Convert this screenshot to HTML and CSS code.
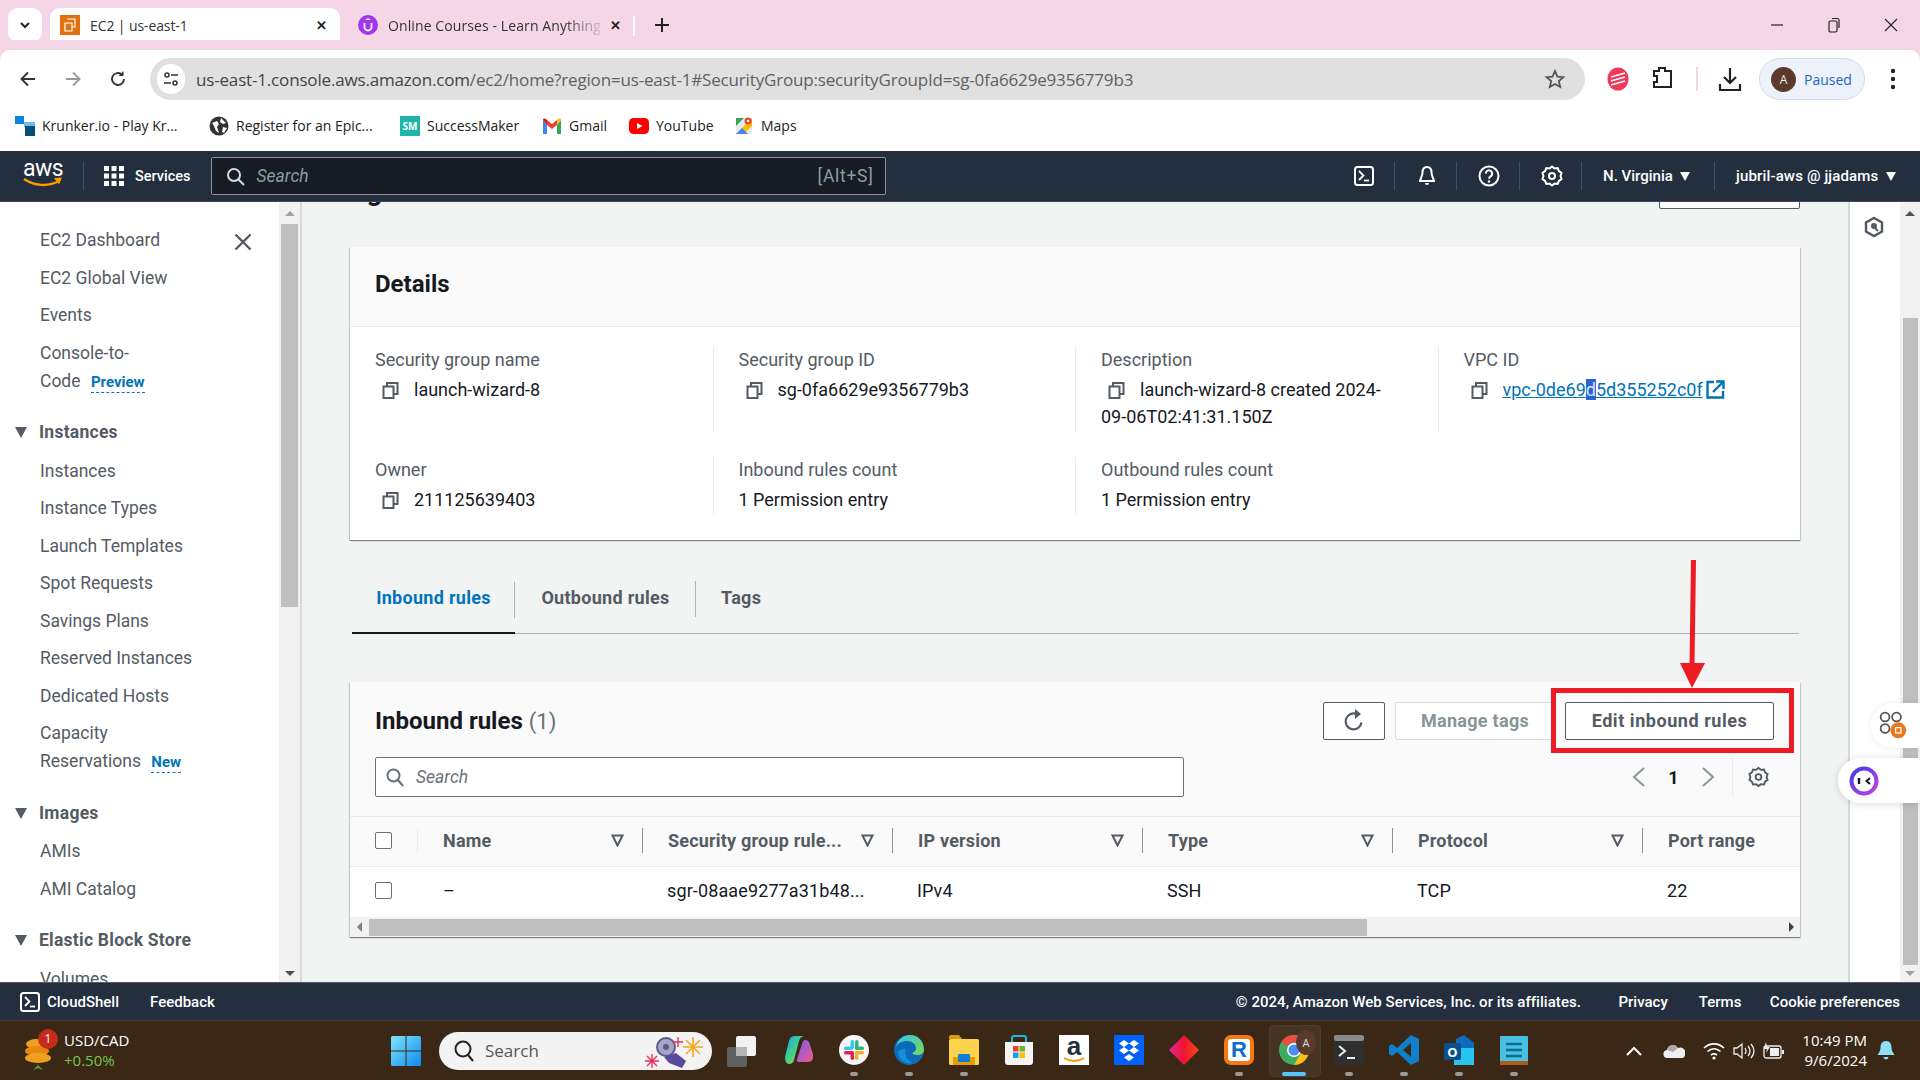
FILE: index.html
```html
<!DOCTYPE html>
<html lang="en">

<head>
    <meta charset="UTF-8">
    <title>EC2 | us-east-1</title>
    <link rel="stylesheet" href="styles.css">
</head>

<body>
    <!-- browser -->
    <div class="tabstrip">
        <div class="tab-search"><svg width="14" height="14" viewBox="0 0 14 14"><path d="M3 5l4 4 4-4" fill="none" stroke="#222" stroke-width="2"/></svg></div>
        <div class="tab active">
            <svg class="favicon" width="20" height="20" viewBox="0 0 20 20"><rect width="20" height="20" fill="#e2700f"/><path d="M7 4h8v8h-3M5 8h7v8H5z" fill="none" stroke="#fff" stroke-width="1.2"/></svg>
            <span class="tab-title">EC2 | us-east-1</span>
            <span class="tab-x">✕</span>
        </div>
        <div class="tab other">
            <svg class="favicon" width="20" height="20" viewBox="0 0 20 20"><circle cx="10" cy="10" r="10" fill="#a435f0"/><path d="M6.5 8v4a3.5 3.5 0 0 0 7 0V8" fill="none" stroke="#fff" stroke-width="1.8"/><path d="M10 3l3 2H7z" fill="#fff"/></svg>
            <span class="tab-title fade">Online Courses - Learn Anything</span>
            <span class="tab-x">✕</span>
        </div>
        <div class="tab-sep"></div>
        <svg class="tab-new" width="16" height="16" viewBox="0 0 16 16"><path d="M8 1v14M1 8h14" stroke="#222" stroke-width="2"/></svg>
        <div class="win-controls">
            <svg width="14" height="14" viewBox="0 0 14 14"><path d="M1 7h12" stroke="#222" stroke-width="1.2"/></svg>
            <svg width="14" height="16" viewBox="0 0 14 16"><rect x="2" y="4" width="8" height="11" rx="1.5" fill="none" stroke="#222" stroke-width="1.2"/><path d="M5 1.5h5a2 2 0 0 1 2 2V11" fill="none" stroke="#222" stroke-width="1.2"/></svg>
            <svg width="14" height="14" viewBox="0 0 14 14"><path d="M1 1l12 12M13 1L1 13" stroke="#222" stroke-width="1.1"/></svg>
        </div>
    </div>

    <div class="toolbar">
        <svg class="nav-btn" width="20" height="20" viewBox="0 0 20 20"><path d="M17 10H4M10 3.5L3.5 10l6.5 6.5" fill="none" stroke="#333" stroke-width="1.9"/></svg>
        <svg class="nav-btn" width="20" height="20" viewBox="0 0 20 20"><path d="M3 10h13M10 3.5l6.5 6.5-6.5 6.5" fill="none" stroke="#999" stroke-width="1.9"/></svg>
        <svg class="nav-btn" width="20" height="20" viewBox="0 0 20 20"><path d="M16 10a6 6 0 1 1-2-4.5" fill="none" stroke="#333" stroke-width="1.9"/><path d="M15.500 2v5h-5z" fill="#333"/></svg>
        <div class="omnibox">
            <div class="site-info"><svg width="18" height="18" viewBox="0 0 18 18"><circle cx="5" cy="5" r="2" fill="none" stroke="#333" stroke-width="1.5"/><circle cx="13" cy="13" r="2" fill="none" stroke="#333" stroke-width="1.5"/><path d="M9 5h7M2 13h7" stroke="#333" stroke-width="1.5"/></svg></div>
            <span class="url"><b>us-east-1.console.aws.amazon.com</b>/ec2/home?region=us-east-1#SecurityGroup:securityGroupId=sg-0fa6629e9356779b3</span>
            <svg class="star" width="22" height="22" viewBox="0 0 22 22"><path d="M11 3l2.400 5.600 6 .5-4.600 4 1.400 5.900L11 16l-5.200 3 1.400-5.900-4.600-4 6-.5z" fill="none" stroke="#555" stroke-width="1.8"/></svg>
        </div>
        <svg class="ext-red" width="22" height="24" viewBox="0 0 22 24"><ellipse cx="11" cy="12" rx="10.500" ry="11.500" fill="#f0385b"/><path d="M4 10l14-4M4 14l14-4M4 18l14-4" stroke="#fff" stroke-width="1.800"/></svg>
        <svg class="ext-puzzle" width="22" height="26" viewBox="0 0 22 26"><path d="M2 5h5V2h6v3h6v16H2v-5h3v-6H2z" fill="none" stroke="#222" stroke-width="2"/></svg>
        <div class="tool-sep"></div>
        <svg class="ext-download" width="24" height="26" viewBox="0 0 24 26"><path d="M12 2v15M6 11l6 6 6-6" fill="none" stroke="#222" stroke-width="2.200"/><path d="M2 18v6h20v-6" fill="none" stroke="#222" stroke-width="2.200"/></svg>
        <div class="profile"><span class="avatar">A</span><span>Paused</span></div>
        <svg class="menu-dots" width="6" height="24" viewBox="0 0 6 24"><circle cx="3" cy="4" r="2.200" fill="#222"/><circle cx="3" cy="12" r="2.200" fill="#222"/><circle cx="3" cy="20" r="2.200" fill="#222"/></svg>
    </div>

    <div class="bookmarks">
        <div class="bm krunker"><svg width="20" height="20" viewBox="0 0 20 20"><rect width="9" height="8" fill="#0b84d8"/><rect x="9" y="6" width="11" height="5" fill="#6dbbe9"/><rect x="10" y="10" width="10" height="10" fill="#064d78"/></svg><span>Krunker.io - Play Kr...</span></div>
        <div class="bm epic"><svg width="20" height="20" viewBox="0 0 20 20"><circle cx="10" cy="10" r="9.500" fill="#333"/><path d="M3 7l5-2 2 3-2 3 2 6-3-2-2-5zM12 2l5 5-3 1-3-2zM14 11l4 1-3 5-2-1z" fill="#fff"/></svg><span>Register for an Epic...</span></div>
        <div class="bm sm"><span class="sm-icon">SM</span><span>SuccessMaker</span></div>
        <div class="bm gmail"><svg width="20" height="18" viewBox="0 0 20 18"><path d="M1 3v14h4V8z" fill="#4285f4"/><path d="M19 3v14h-4V8z" fill="#34a853"/><path d="M5 8V3l5 4 5-4v5l-5 4z" fill="#ea4335"/><path d="M1 3l4 5V3C3 1 1 1 1 3z" fill="#c5221f"/><path d="M19 3l-4 5V3c2-2 4-2 4 0z" fill="#fbbc04"/></svg><span>Gmail</span></div>
        <div class="bm yt"><svg width="20" height="18" viewBox="0 0 20 18"><rect y="1" width="20" height="16" rx="4.500" fill="#f00"/><path d="M8 6l5.500 3L8 12z" fill="#fff"/></svg><span>YouTube</span></div>
        <div class="bm maps"><svg width="20" height="20" viewBox="0 0 20 20"><path d="M2 2h16v16H2z" fill="#e8eaed"/><path d="M2 18L18 2v8l-8 8z" fill="#fbbc04"/><path d="M2 2h8L2 10z" fill="#34a853"/><path d="M2 18l6-6 6 6z" fill="#4285f4"/><circle cx="14" cy="5" r="3.500" fill="#ea4335"/><circle cx="14" cy="5" r="1.300" fill="#fff"/></svg><span>Maps</span></div>
    </div>

    <!-- console top bar -->
    <header class="aws-bar">
        <div class="aws-logo"><span>aws</span><svg width="40" height="12" viewBox="0 0 40 12"><path d="M1 2c10 7 24 8 35 2" fill="none" stroke="#f90" stroke-width="2.400"/><path d="M31 1l8-.5-3 7z" fill="#f90"/></svg></div>
        <div class="bar-sep logo-sep"></div>
        <svg class="grid-icon" width="20" height="20" viewBox="0 0 20 20" fill="#fff"><rect width="5" height="5"/><rect x="7.500" width="5" height="5"/><rect x="15" width="5" height="5"/><rect y="7.500" width="5" height="5"/><rect x="7.500" y="7.500" width="5" height="5"/><rect x="15" y="7.500" width="5" height="5"/><rect y="15" width="5" height="5"/><rect x="7.500" y="15" width="5" height="5"/><rect x="15" y="15" width="5" height="5"/></svg>
        <span class="services">Services</span>
        <div class="aws-search">
            <svg width="19" height="19" viewBox="0 0 19 19"><circle cx="8" cy="8" r="6" fill="none" stroke="#d5dbdb" stroke-width="2"/><path d="M12.500 12.500L18 18" stroke="#d5dbdb" stroke-width="2"/></svg>
            <span class="ph">Search</span>
            <span class="kbd">[Alt+S]</span>
        </div>
        <div class="bar-right">
            <div class="bar-icon"><svg width="20" height="20" viewBox="0 0 20 20"><rect x="1" y="1" width="18" height="18" rx="2.500" fill="none" stroke="#fff" stroke-width="2"/><path d="M5 5l4.500 4.500L5 14" fill="none" stroke="#fff" stroke-width="1.800"/><path d="M10 14.500h5" stroke="#fff" stroke-width="1.800"/></svg></div>
            <div class="bar-icon"><svg width="20" height="22" viewBox="0 0 20 22"><path d="M10 2c-3 0-4.500 2.500-4.500 5.500 0 4-2.500 7-2.500 8.500h14c0-1.500-2.500-4.500-2.500-8.500C14.500 4.500 13 2 10 2z" fill="none" stroke="#fff" stroke-width="2"/><path d="M8 18a2 2 0 0 0 4 0z" fill="#fff"/></svg></div>
            <div class="bar-icon"><svg width="22" height="22" viewBox="0 0 22 22"><circle cx="11" cy="11" r="9.500" fill="none" stroke="#fff" stroke-width="2"/><path d="M7.800 8.500a3.200 3.200 0 1 1 4.800 2.800c-1 .6-1.600 1.200-1.600 2.400" fill="none" stroke="#fff" stroke-width="2"/><circle cx="11" cy="16.500" r="1.200" fill="#fff"/></svg></div>
            <div class="bar-icon"><svg width="22" height="22" viewBox="0 0 22 22"><path d="M11 1.500l2.500 2 3.200-.4 1.200 3 2.600 1.900-1 3 1 3-2.600 1.900-1.200 3-3.200-.4-2.500 2-2.500-2-3.200.4-1.200-3L1.500 14l1-3-1-3 2.600-1.900 1.200-3 3.200.4z" fill="none" stroke="#fff" stroke-width="2"/><circle cx="11" cy="11" r="3" fill="none" stroke="#fff" stroke-width="2"/></svg></div>
            <div class="bar-menu region">N. Virginia <i class="caret"></i></div>
            <div class="bar-menu account">jubril-aws @ jjadams <i class="caret"></i></div>
        </div>
    </header>

    <div class="middle">
        <nav class="sidebar">
            <div class="nav-scroll">
                <svg class="nav-close" width="18" height="18" viewBox="0 0 18 18"><path d="M1.500 1.500l15 15M16.500 1.500l-15 15" stroke="#545b64" stroke-width="2.400"/></svg>
                <a class="nav-item">EC2 Dashboard</a>
                <a class="nav-item">EC2 Global View</a>
                <a class="nav-item">Events</a>
                <a class="nav-item">Console-to-<br>Code <span class="nav-tag">Preview</span></a>
                <div class="nav-head"><i class="tri"></i>Instances</div>
                <a class="nav-item">Instances</a>
                <a class="nav-item">Instance Types</a>
                <a class="nav-item">Launch Templates</a>
                <a class="nav-item">Spot Requests</a>
                <a class="nav-item">Savings Plans</a>
                <a class="nav-item">Reserved Instances</a>
                <a class="nav-item">Dedicated Hosts</a>
                <a class="nav-item">Capacity<br>Reservations <span class="nav-tag">New</span></a>
                <div class="nav-head"><i class="tri"></i>Images</div>
                <a class="nav-item">AMIs</a>
                <a class="nav-item">AMI Catalog</a>
                <div class="nav-head"><i class="tri"></i>Elastic Block Store</div>
                <a class="nav-item">Volumes</a>
            </div>
            <div class="vscroll nav-bar">
                <i class="arr up"></i>
                <div class="thumb"></div>
                <div class="grow"></div>
                <i class="arr down"></i>
            </div>
        </nav>

        <main class="content">
            <div class="page-head">
                <h1>sg-0fa6629e9356779b3 - launch-wizard-8</h1>
                <div class="head-btn"></div>
            </div>

            <section class="card">
                <div class="card-head details-head"><h2>Details</h2></div>
                <div class="details-grid">
                    <div class="cell">
                        <div class="label">Security group name</div>
                        <div class="value"><svg class="copy" viewBox="0 0 17 17"><path d="M5 4V1h10.500v11H12" fill="none" stroke="#545b64" stroke-width="2"/><rect x="1.500" y="4.500" width="10" height="11.500" fill="none" stroke="#545b64" stroke-width="2"/></svg>launch-wizard-8</div>
                    </div>
                    <div class="cell">
                        <div class="label">Security group ID</div>
                        <div class="value"><svg class="copy" viewBox="0 0 17 17"><path d="M5 4V1h10.500v11H12" fill="none" stroke="#545b64" stroke-width="2"/><rect x="1.500" y="4.500" width="10" height="11.500" fill="none" stroke="#545b64" stroke-width="2"/></svg>sg-0fa6629e9356779b3</div>
                    </div>
                    <div class="cell">
                        <div class="label">Description</div>
                        <div class="value"><svg class="copy" viewBox="0 0 17 17"><path d="M5 4V1h10.500v11H12" fill="none" stroke="#545b64" stroke-width="2"/><rect x="1.500" y="4.500" width="10" height="11.500" fill="none" stroke="#545b64" stroke-width="2"/></svg>launch-wizard-8 created 2024-<br>09-06T02:41:31.150Z</div>
                    </div>
                    <div class="cell">
                        <div class="label">VPC ID</div>
                        <div class="value"><svg class="copy" viewBox="0 0 17 17"><path d="M5 4V1h10.500v11H12" fill="none" stroke="#545b64" stroke-width="2"/><rect x="1.500" y="4.500" width="10" height="11.500" fill="none" stroke="#545b64" stroke-width="2"/></svg><a class="link">vpc-0de69<span class="sel">d</span>5d355252c0f</a><svg class="ext" width="19" height="19" viewBox="0 0 19 19"><path d="M8 2H1.500v15.500H17V11" fill="none" stroke="#0073bb" stroke-width="2.400"/><path d="M7 12l9-9M10 1.500h7.500V9" fill="none" stroke="#0073bb" stroke-width="2.400"/></svg></div>
                    </div>
                    <div class="cell">
                        <div class="label">Owner</div>
                        <div class="value"><svg class="copy" viewBox="0 0 17 17"><path d="M5 4V1h10.500v11H12" fill="none" stroke="#545b64" stroke-width="2"/><rect x="1.500" y="4.500" width="10" height="11.500" fill="none" stroke="#545b64" stroke-width="2"/></svg>211125639403</div>
                    </div>
                    <div class="cell">
                        <div class="label">Inbound rules count</div>
                        <div class="value">1 Permission entry</div>
                    </div>
                    <div class="cell">
                        <div class="label">Outbound rules count</div>
                        <div class="value">1 Permission entry</div>
                    </div>
                </div>
            </section>

            <div class="tabs">
                <div class="rule-tab on">Inbound rules</div>
                <div class="rule-tab out">Outbound rules</div>
                <div class="rule-tab tags">Tags</div>
            </div>

            <section class="card rules">
                <div class="card-head rules-head">
                    <div class="rules-top">
                        <h2>Inbound rules <span class="count">(1)</span></h2>
                        <div class="actions">
                            <div class="btn refresh"><svg width="22" height="24" viewBox="0 0 22 24"><path d="M18.500 13.500a8 8 0 1 1-5-8.600" fill="none" stroke="#545b64" stroke-width="2.200"/><path d="M12 0v10l6-5z" fill="#545b64"/></svg></div>
                            <div class="btn off">Manage tags</div>
                            <div class="btn edit">Edit inbound rules</div>
                        </div>
                    </div>
                    <div class="rules-tools">
                        <div class="rule-search">
                            <svg width="18" height="19" viewBox="0 0 18 19"><circle cx="7.500" cy="7.500" r="6" fill="none" stroke="#687078" stroke-width="2"/><path d="M12 12l5 6" stroke="#687078" stroke-width="2"/></svg>
                            <span>Search</span>
                        </div>
                        <div class="pager">
                            <svg width="14" height="20" viewBox="0 0 14 20"><path d="M12 1L2 10l10 9" fill="none" stroke="#879596" stroke-width="2"/></svg>
                            <span>1</span>
                            <svg width="14" height="20" viewBox="0 0 14 20"><path d="M2 1l10 9-10 9" fill="none" stroke="#879596" stroke-width="2"/></svg>
                            <div class="pager-gear"><svg width="21" height="22" viewBox="0 0 22 22"><path d="M11 1.500l2.500 2 3.200-.4 1.200 3 2.600 1.900-1 3 1 3-2.600 1.900-1.200 3-3.200-.4-2.500 2-2.500-2-3.200.4-1.200-3L1.500 14l1-3-1-3 2.600-1.900 1.200-3 3.200.4z" fill="none" stroke="#545b64" stroke-width="2"/><circle cx="11" cy="11" r="3" fill="none" stroke="#545b64" stroke-width="2"/></svg></div>
                        </div>
                    </div>
                </div>
                <table class="rules-table">
                    <colgroup>
                        <col class="c-check"><col class="c-name"><col class="c-mid"><col class="c-mid"><col class="c-mid"><col class="c-mid"><col>
                    </colgroup>
                    <thead>
                        <tr>
                            <th><div class="th first"><i class="box"></i></div></th>
                            <th><div class="th light">Name<svg class="filter" viewBox="0 0 13 13"><path d="M1.500 1.500h10L6.500 11.500z" fill="none" stroke="#545b64" stroke-width="2"/></svg></div></th>
                            <th><div class="th">Security group rule...<svg class="filter" viewBox="0 0 13 13"><path d="M1.500 1.500h10L6.500 11.500z" fill="none" stroke="#545b64" stroke-width="2"/></svg></div></th>
                            <th><div class="th">IP version<svg class="filter" viewBox="0 0 13 13"><path d="M1.500 1.500h10L6.500 11.500z" fill="none" stroke="#545b64" stroke-width="2"/></svg></div></th>
                            <th><div class="th">Type<svg class="filter" viewBox="0 0 13 13"><path d="M1.500 1.500h10L6.500 11.500z" fill="none" stroke="#545b64" stroke-width="2"/></svg></div></th>
                            <th><div class="th">Protocol<svg class="filter" viewBox="0 0 13 13"><path d="M1.500 1.500h10L6.500 11.500z" fill="none" stroke="#545b64" stroke-width="2"/></svg></div></th>
                            <th><div class="th">Port range</div></th>
                        </tr>
                    </thead>
                    <tbody>
                        <tr>
                            <td class="check-cell"><i class="box"></i></td>
                            <td class="td-name">–</td>
                            <td>sgr-08aae9277a31b48...</td>
                            <td>IPv4</td>
                            <td>SSH</td>
                            <td>TCP</td>
                            <td>22</td>
                        </tr>
                    </tbody>
                </table>
                <div class="hscroll">
                    <i class="arr left"></i>
                    <div class="hthumb"></div>
                    <div class="grow"></div>
                    <i class="arr right"></i>
                </div>
            </section>

            <!-- annotation drawn on the screenshot -->
            <div class="mark-box"></div>
            <svg class="mark-arrow" width="26" height="128" viewBox="0 0 26 128"><path d="M14.500 0L13 105" stroke="#ed1c24" stroke-width="5" fill="none"/><path d="M1 103h25l-13 25z" fill="#ed1c24"/></svg>
        </main>

        <aside class="rail">
            <svg width="22" height="22" viewBox="0 0 22 22"><path d="M11 2l8 4.500v9L11 20l-8-4.500v-9z" fill="none" stroke="#545b64" stroke-width="2.400"/><circle cx="11" cy="10" r="3" fill="#545b64"/><path d="M12 12l3 3" stroke="#545b64" stroke-width="2"/></svg>
        </aside>
        <div class="vscroll page-bar">
            <i class="arr up"></i>
            <div class="thumb"></div>
            <i class="arr down"></i>
        </div>
        <div class="float-a"><svg width="34" height="34" viewBox="0 0 34 34"><circle cx="8" cy="8" r="5" fill="none" stroke="#555" stroke-width="2"/><circle cx="21" cy="8" r="5" fill="none" stroke="#555" stroke-width="2"/><circle cx="8" cy="21" r="5" fill="none" stroke="#555" stroke-width="2"/><circle cx="23" cy="23" r="9" fill="#e8781a"/><rect x="20" y="20" width="6" height="6" fill="none" stroke="#fff" stroke-width="1.400"/></svg></div>
        <div class="float-b"><svg width="30" height="30" viewBox="0 0 30 30"><defs><linearGradient id="ring" x1="0" y1="0" x2="1" y2="1"><stop offset="0" stop-color="#3a3ff0"/><stop offset="1" stop-color="#c43ee0"/></linearGradient></defs><circle cx="15" cy="15" r="12.500" fill="#fff" stroke="url(#ring)" stroke-width="4"/><path d="M10 12v6" stroke="#15152b" stroke-width="2.400"/><path d="M21 12l-3.500 3 3.500 3" fill="none" stroke="#15152b" stroke-width="2"/></svg></div>
    </div>

    <footer class="aws-foot">
        <svg width="20" height="20" viewBox="0 0 20 20"><rect x="1" y="1" width="18" height="18" rx="2.500" fill="none" stroke="#fff" stroke-width="2"/><path d="M5 5l4.500 4.500L5 14" fill="none" stroke="#fff" stroke-width="1.800"/><path d="M10 14.500h5" stroke="#fff" stroke-width="1.800"/></svg>
        <span class="foot-shell">CloudShell</span>
        <span class="foot-feedback">Feedback</span>
        <span class="foot-copy">© 2024, Amazon Web Services, Inc. or its affiliates.</span>
        <span class="foot-link first">Privacy</span>
        <span class="foot-link">Terms</span>
        <span class="foot-link">Cookie preferences</span>
    </footer>

    <!-- windows taskbar -->
    <div class="taskbar">
        <div class="ticker">
            <svg width="30" height="44" viewBox="0 0 30 44"><ellipse cx="14" cy="15" rx="11" ry="5" fill="#f0a020"/><ellipse cx="14" cy="22" rx="12" ry="5" fill="#e8860f"/><ellipse cx="15" cy="29" rx="13" ry="5" fill="#f0a020"/><path d="M10 41l5-5 5 5-5-2z" fill="#5aa820"/></svg>
            <span class="ticker-badge">1</span>
            <div class="ticker-text"><div>USD/CAD</div><div class="up">+0.50%</div></div>
        </div>
        <svg class="win-logo" width="30" height="30" viewBox="0 0 30 30"><defs><linearGradient id="win" x1="0" y1="0" x2="1" y2="1"><stop offset="0" stop-color="#7fe3f8"/><stop offset="1" stop-color="#0d8cf0"/></linearGradient></defs><path d="M0 1.500A1.500 1.500 0 0 1 1.500 0h13v14.500H0zM15.500 0h13A1.500 1.500 0 0 1 30 1.500v13H15.500zM0 15.500h14.500V30h-13A1.500 1.500 0 0 1 0 28.500zM15.500 15.500H30v13a1.500 1.500 0 0 1-1.500 1.500h-13z" fill="url(#win)"/></svg>
        <div class="win-search">
            <svg width="22" height="24" viewBox="0 0 22 24"><circle cx="10" cy="10" r="7.500" fill="none" stroke="#222" stroke-width="2"/><path d="M15 16l5 6" stroke="#222" stroke-width="2"/></svg>
            <span>Search</span>
            <svg class="search-art" width="62" height="36" viewBox="0 0 62 36"><circle cx="24" cy="14" r="9" fill="#a8a4c8" stroke="#5e5a86" stroke-width="2"/><circle cx="24" cy="14" r="3" fill="#5e5a86"/><path d="M22 24l12 -4 10 8-4 7-13-5z" fill="#5b4a9c"/><g stroke="#e8305c" stroke-width="1.400"><path d="M10 21v14M3 28h14M5 23l10 10M15 23L5 33"/><path d="M36 4v10M31 9h10"/></g><g stroke="#f5a81c" stroke-width="1.600"><path d="M51 4v20M41 14h20M44 7l14 14M58 7L44 21"/></g></svg>
        </div>
        <svg class="task-view" width="32" height="32" viewBox="0 0 32 32"><rect x="0" y="12" width="20" height="20" rx="2" fill="#606060"/><rect x="9" y="1" width="20" height="20" rx="2" fill="#f2f2f2"/><rect x="9" y="12" width="11" height="9" fill="#b5b5b5"/></svg>

        <div class="apps">
            <div class="app"><svg class="app-ic" viewBox="0 0 30 30"><defs><linearGradient id="cp1" x1="0" y1="0" x2="1" y2="1"><stop offset="0" stop-color="#1da1f2"/><stop offset=".5" stop-color="#3fd08a"/><stop offset="1" stop-color="#f8c32a"/></linearGradient><linearGradient id="cp2" x1="0" y1="0" x2="1" y2="1"><stop offset="0" stop-color="#7b5cf0"/><stop offset="1" stop-color="#f15a8a"/></linearGradient></defs><path d="M11 1h9q-4 1-5 5l-5 19q-1 4-5 4T1 22l4-16q1-5 6-5z" fill="url(#cp1)"/><path d="M21 5q4 0 5 5l3 9q1 8-5 8H15q-3 0-2-3l5-15q1-4 3-4z" fill="url(#cp2)"/></svg><i class="pip none"></i></div>
            <div class="app"><svg class="app-ic" viewBox="0 0 30 30"><ellipse cx="15" cy="15" rx="15" ry="15" fill="#f6f6f6"/><rect x="11.500" y="5" width="3.500" height="9" rx="1.700" fill="#36c5f0"/><rect x="5" y="11.500" width="9" height="3.500" rx="1.700" fill="#36c5f0"/><rect x="16" y="5" width="3.500" height="9" rx="1.700" fill="#2eb67d"/><rect x="16" y="11.500" width="9" height="3.500" rx="1.700" fill="#2eb67d"/><rect x="16" y="16" width="3.500" height="9" rx="1.700" fill="#ecb22e"/><rect x="16" y="16" width="9" height="3.500" rx="1.700" fill="#ecb22e"/><rect x="11.500" y="16" width="3.500" height="9" rx="1.700" fill="#e01e5a"/><rect x="5" y="16" width="9" height="3.500" rx="1.700" fill="#e01e5a"/></svg><i class="pip"></i></div>
            <div class="app"><svg class="app-ic" viewBox="0 0 30 30"><defs><linearGradient id="edge" x1="0" y1="0" x2="1" y2="1"><stop offset="0" stop-color="#35c1f1"/><stop offset="1" stop-color="#7bdb4c"/></linearGradient></defs><ellipse cx="15" cy="15" rx="15" ry="15" fill="#0c6ab8"/><path d="M2 13C3 4 10 0 16 0c8 0 14 6 14 15 0 3-3 5-7 5-3 0-4-1-5-2 3-1 4-3 4-5 0-4-4-7-9-7S3 8 2 13z" fill="url(#edge)"/><path d="M12 14c-2 4 0 11 7 14-6 2-14-2-15-11 1-2 5-4 8-3z" fill="#1291d6"/></svg><i class="pip"></i></div>
            <div class="app"><svg class="app-ic" viewBox="0 0 30 30"><path d="M0 2q0-2 2-2h8l3 4h-13z" fill="#d99a12"/><rect y="4" width="30" height="26" rx="1.500" fill="#fcd34d"/><rect x="4" y="22" width="22" height="8" fill="#e69c00"/><rect x="9" y="19" width="12" height="8" rx="1" fill="#0f7fd4"/></svg><i class="pip"></i></div>
            <div class="app"><svg class="app-ic" viewBox="0 0 30 30"><path d="M8 7V3q0-2 2-2h10q2 0 2 2v4" fill="none" stroke="#22b5e8" stroke-width="2"/><path d="M1 7h28v20q0 3-3 3H4q-3 0-3-3z" fill="#f3f3f3"/><rect x="9" y="11" width="5.500" height="5.500" fill="#e8452c"/><rect x="15.500" y="11" width="5.500" height="5.500" fill="#6cb52d"/><rect x="9" y="17.500" width="5.500" height="5.500" fill="#17a1e8"/><rect x="15.500" y="17.500" width="5.500" height="5.500" fill="#fbbc0a"/></svg><i class="pip none"></i></div>
            <div class="app"><div class="app-ic amazon">a<svg width="22" height="7" viewBox="0 0 22 7"><path d="M1 1c6 4 14 4 20 0" fill="none" stroke="#f90" stroke-width="1.800"/></svg></div><i class="pip none"></i></div>
            <div class="app"><svg class="app-ic" viewBox="0 0 30 30"><rect width="30" height="30" fill="#0061fe"/><path d="M10 5l5 3.500-5 3.500-5-3.500zM20 5l5 3.500-5 3.500-5-3.500zM10 12l5 3.500-5 3.500-5-3.500zM20 12l5 3.500-5 3.500-5-3.500zM15 19l5 3.500-5 3.500-5-3.500z" fill="#fff"/></svg><i class="pip none"></i></div>
            <div class="app"><svg class="app-ic" viewBox="0 0 30 30"><defs><linearGradient id="dia" x1="0" y1="0" x2="1" y2="0"><stop offset="0" stop-color="#e0259a"/><stop offset=".5" stop-color="#f0142e"/><stop offset="1" stop-color="#f54a16"/></linearGradient></defs><path d="M15 0l15 15-15 15L0 15z" fill="url(#dia)"/></svg><i class="pip none"></i></div>
            <div class="app"><div class="app-ic r-app"><span>R</span></div><i class="pip"></i></div>
            <div class="app current">
                <svg class="app-ic" viewBox="0 0 30 30"><circle cx="15" cy="15" r="15" fill="#34a853"/><path d="M15 0a15 15 0 0 1 13 7.500H15a7.500 7.500 0 0 0-6.500 3.700L2 7.500A15 15 0 0 1 15 0z" fill="#ea4335"/><path d="M28 7.500A15 15 0 0 1 15 30l6.500-11.200a7.500 7.500 0 0 0 0-7.500z" fill="#fbbc05"/><circle cx="15" cy="15" r="7" fill="#fff"/><circle cx="15" cy="15" r="5.500" fill="#4285f4"/></svg>
                <span class="app-badge">A</span>
                <i class="pip wide"></i>
            </div>
            <div class="app"><svg class="app-ic" viewBox="0 0 30 30"><rect width="30" height="30" rx="2" fill="#2f2f2f"/><rect width="30" height="6" rx="2" fill="#8a8a8a"/><path d="M5 11l6 5-6 5" fill="none" stroke="#eee" stroke-width="2"/><path d="M13 23h8" stroke="#eee" stroke-width="2"/></svg><i class="pip"></i></div>
            <div class="app"><svg class="app-ic" viewBox="0 0 30 30"><path d="M22 0l8 4v22l-8 4L8 17l-5 4-3-2V11l3-2 5 4zM22 8l-8 7 8 7z" fill="#0f80cc"/></svg><i class="pip"></i></div>
            <div class="app"><svg class="app-ic" viewBox="0 0 30 30"><path d="M12 4l8-4 10 8v10l-10 8H12z" fill="#0f6cbd"/><path d="M10 13h20v17H10z" fill="#28c3ee"/><rect y="8" width="17" height="17" rx="2" fill="#0a4f92"/><text x="8.500" y="21.500" class="out-o">O</text></svg><i class="pip"></i></div>
            <div class="app"><svg class="app-ic" viewBox="0 0 30 30"><rect x="1" y="1" width="28" height="27" rx="1" fill="#48bfe3"/><rect x="1" y="26" width="28" height="4" fill="#b05a1c"/><path d="M7 9h16M7 15h16M7 21h16" stroke="#0b6c94" stroke-width="2.600"/></svg><i class="pip"></i></div>
        </div>

        <div class="tray">
            <svg class="tr-up" width="16" height="10" viewBox="0 0 16 10"><path d="M1 9l7-7 7 7" fill="none" stroke="#fff" stroke-width="2"/></svg>
            <svg class="tr-cloud" width="22" height="14" viewBox="0 0 22 14"><path d="M5 14a4 4 0 0 1-1-8 6 6 0 0 1 11-2 5 5 0 0 1 7 6 4 4 0 0 1-2 4z" fill="#eee"/><path d="M4 6a6 6 0 0 1 11-2l-5 4z" fill="#aaa"/></svg>
            <svg class="tr-wifi" width="22" height="18" viewBox="0 0 22 18"><path d="M1 6c6-5.500 14-5.500 20 0M4.500 9.500c4-3.500 9-3.500 13 0M8 13c2-1.500 4-1.500 6 0" fill="none" stroke="#fff" stroke-width="1.600"/><circle cx="11" cy="16" r="1.600" fill="#fff"/></svg>
            <svg class="tr-sound" width="22" height="18" viewBox="0 0 22 18"><path d="M1 6h3l5-4v14l-5-4H1z" fill="none" stroke="#eee" stroke-width="1.300"/><path d="M12 6q2 3 0 6M15 4q4 5 0 10M18 2q6 7 0 14" fill="none" stroke="#eee" stroke-width="1.300"/></svg>
            <svg class="tr-batt" width="22" height="18" viewBox="0 0 22 18"><rect x="1" y="4" width="17" height="12" rx="2" fill="none" stroke="#eee" stroke-width="1.300"/><rect x="7" y="6" width="9" height="8" fill="#eee"/><rect x="19" y="8" width="2" height="4" fill="#eee"/><path d="M3 0L1 7h3l-1 4 4-6H4z" fill="#eee"/></svg>
            <div class="clock"><div>10:49 PM</div><div>9/6/2024</div></div>
            <svg class="tr-bell" width="18" height="20" viewBox="0 0 18 20"><path d="M9 0C5 0 3.500 3 3.500 7c0 3-2 5-3 7h17c-1-2-3-4-3-7 0-4-1.500-7-5.500-7z" fill="#8ee0f8"/><path d="M6.500 16a2.500 2.500 0 0 0 5 0z" fill="#8ee0f8"/></svg>
        </div>
    </div>
</body>

</html>
```
FILE: styles.css
```css
* {
    margin: 0;
    padding: 0;
    box-sizing: border-box;
}

html,
body {
    width: 1920px;
    height: 1080px;
    overflow: hidden;
}

body {
    display: flex;
    flex-direction: column;
    font-family: Roboto, "Liberation Sans", sans-serif;
    color: #16191f;
    background: #fff;
}

i {
    display: block;
    font-style: normal;
}

svg {
    display: block;
    flex: none;
}

/* browser */
.tabstrip {
    height: 50px;
    flex: none;
    display: flex;
    align-items: flex-end;
    background: #f5d6e6;
    font-family: "Open Sans", sans-serif;
    font-size: 14px;
    color: #333;
}

.tab-search {
    width: 34px;
    height: 34px;
    margin: 0 8px 8px 8px;
    border-radius: 10px;
    background: #fff;
    display: flex;
    align-items: center;
    justify-content: center;
}

.tab {
    height: 42px;
    display: flex;
    align-items: center;
    border-radius: 10px 10px 0 0;
}

.tab.active {
    width: 290px;
    background: #fff;
    padding: 0 11px 8px 10px;
}

.tab.other {
    width: 298px;
    padding: 0 15px 8px 18px;
}

.tab-title {
    flex: 1;
    margin-left: 10px;
    white-space: nowrap;
    overflow: hidden;
    letter-spacing: -0.1px;
}

.tab-title.fade {
    letter-spacing: 0.1px;
    -webkit-mask-image: linear-gradient(to right, #000 80%, transparent 100%);
    mask-image: linear-gradient(to right, #000 80%, transparent 100%);
}

.tab-x {
    width: 16px;
    font-size: 13px;
    text-align: center;
    color: #222;
    font-weight: 700;
}

.tab-sep {
    width: 2px;
    height: 20px;
    margin: 0 0 14px -5px;
    background: #fff;
}

.tab-new {
    margin: 0 0 17px 19px;
}

.win-controls {
    margin-left: auto;
    margin-bottom: 17px;
    display: flex;
    align-items: center;
    gap: 43px;
    padding-right: 22px;
}

.toolbar {
    height: 59px;
    flex: none;
    display: flex;
    align-items: center;
    background: #fff;
    padding: 0 0 1px 18px;
    border-radius: 10px 10px 0 0;
    box-shadow: 0 -10px 0 #f5d6e6;
    position: relative;
}

.nav-btn {
    margin-right: 25px;
}

.omnibox {
    width: 1435px;
    height: 42px;
    margin-left: -3px;
    border-radius: 21px;
    background: #e0e0e0;
    display: flex;
    align-items: center;
    padding: 0 19px 0 7px;
    font-family: "Open Sans", sans-serif;
    font-size: 17px;
    color: #5f6060;
}

.site-info {
    width: 28px;
    height: 30px;
    border-radius: 15px;
    background: #fff;
    display: flex;
    align-items: center;
    justify-content: center;
}

.url {
    margin-left: 11px;
    white-space: nowrap;
    letter-spacing: -0.17px;
}

.url b {
    font-weight: 400;
    color: #444;
}

.star {
    margin-left: auto;
}

.ext-red {
    margin-left: 22px;
}

.ext-puzzle {
    margin-left: 23px;
}

.tool-sep {
    width: 2px;
    height: 24px;
    margin-left: 22px;
    background: #f5d6e6;
}

.ext-download {
    margin-left: 20px;
}

.profile {
    width: 106px;
    height: 42px;
    margin-left: 17px;
    border-radius: 21px;
    background: #edf2fa;
    border: 1px solid #d6dbe6;
    display: flex;
    align-items: center;
    padding-left: 11px;
    gap: 8px;
    font-family: "Open Sans", sans-serif;
    font-size: 14px;
    color: #1f63c9;
}

.avatar {
    width: 25px;
    height: 25px;
    border-radius: 50%;
    background: #5a3a2c;
    color: #eee;
    font-size: 12px;
    text-align: center;
    line-height: 25px;
}

.menu-dots {
    margin-left: 25px;
}

.bookmarks {
    height: 42px;
    flex: none;
    display: flex;
    align-items: center;
    padding: 0 0 9px 15px;
    background: #fff;
    font-family: "Open Sans", sans-serif;
    font-size: 14px;
    color: #222;
}

.bm {
    display: flex;
    align-items: center;
    gap: 7px;
    white-space: nowrap;
}

.krunker {
    width: 194px;
}

.epic {
    width: 191px;
}

.sm {
    width: 142px;
}

.gmail {
    width: 87px;
}

.yt {
    width: 105px;
}

.sm-icon {
    width: 20px;
    height: 20px;
    background: #1fb5a8;
    color: #fff;
    font-size: 10px;
    font-weight: 700;
    line-height: 20px;
    text-align: center;
}

/* console top bar */
.aws-bar {
    height: 51px;
    flex: none;
    display: flex;
    align-items: center;
    background: #232f3e;
    border-bottom: 1px solid #414750;
    color: #fff;
    padding-left: 23px;
    font-size: 15px;
}

.aws-logo {
    width: 40px;
    display: flex;
    flex-direction: column;
    align-items: center;
    font-size: 23px;
    line-height: 17px;
    letter-spacing: -0.5px;
    margin-top: -4px;
}

.bar-sep {
    width: 1px;
    height: 28px;
    background: #414d5c;
}

.logo-sep {
    margin-left: 20px;
}

.grid-icon {
    margin-left: 20px;
}

.services {
    margin-left: 11px;
    font-size: 14.500px;
    font-weight: 500;
}

.aws-search {
    width: 675px;
    height: 38px;
    margin-left: 20px;
    display: flex;
    align-items: center;
    padding: 0 11px 0 14px;
    background: #161b24;
    border: 1px solid #8d9499;
    border-radius: 2px;
    font-size: 17.500px;
    color: #8d9da5;
}

.aws-search .ph {
    margin-left: 12px;
    font-style: italic;
}

.aws-search .kbd {
    margin-left: auto;
    letter-spacing: 0.7px;
}

.bar-right {
    margin-left: auto;
    display: flex;
    align-items: center;
    height: 100%;
}

.bar-icon {
    width: 62.500px;
    height: 28px;
    padding-left: 3px;
    display: flex;
    align-items: center;
    justify-content: center;
    border-right: 1px solid #414d5c;
}

.bar-menu {
    display: flex;
    align-items: center;
    white-space: nowrap;
    font-weight: 500;
}

.region {
    height: 28px;
    width: 133px;
    padding-left: 21px;
    border-right: 1px solid #414d5c;
    gap: 7px;
}

.account {
    width: 205px;
    padding-left: 21px;
    gap: 8px;
    letter-spacing: 0.15px;
}

.caret {
    width: 0;
    height: 0;
    border-left: 5px solid transparent;
    border-right: 5px solid transparent;
    border-top: 9px solid #fff;
}

/* middle */
.middle {
    flex: 1;
    min-height: 0;
    display: flex;
    position: relative;
    background: #f2f3f3;
}

.sidebar {
    width: 302px;
    flex: none;
    display: flex;
    background: #fff;
    border-right: 2px solid #d5dbdb;
}

.nav-scroll {
    width: 279px;
    flex: none;
    padding: 24px 0 0 40px;
    position: relative;
    overflow: hidden;
    font-size: 17.500px;
    line-height: 28px;
    color: #545b64;
}

.nav-close {
    position: absolute;
    left: 234px;
    top: 31px;
}

.nav-item {
    display: block;
    padding-bottom: 9.500px;
    white-space: nowrap;
}

.nav-head {
    margin: 14px 0 10.700px -1px;
    display: flex;
    align-items: center;
    font-weight: 700;
    letter-spacing: 0.25px;
    position: relative;
}

.tri {
    position: absolute;
    left: -24px;
    top: 9px;
    width: 0;
    height: 0;
    border-left: 6.500px solid transparent;
    border-right: 6.500px solid transparent;
    border-top: 11px solid #545b64;
}

.nav-tag {
    display: inline-block;
    margin-left: 6px;
    font-size: 15px;
    line-height: 20px;
    font-weight: 700;
    color: #0073bb;
    border-bottom: 1px dashed #0073bb;
}

.vscroll {
    display: flex;
    flex-direction: column;
    align-items: center;
    background: #f1f1f1;
}

.nav-bar {
    width: 21px;
}

.page-bar {
    width: 20px;
    flex: none;
}

.nav-bar .thumb {
    width: 17px;
    height: 383px;
    margin-top: 8px;
    background: #bfbfbf;
}

.page-bar .thumb {
    width: 15px;
    flex: 1;
    margin-top: 102px;
    margin-bottom: 6px;
    background: #bfbfbf;
}

.grow {
    flex: 1;
}

.arr {
    width: 0;
    height: 0;
    border: 0 solid transparent;
}

.arr.up {
    margin-top: 9px;
    border-width: 0 5px 5px;
    border-bottom-color: #a0a0a0;
}

.page-bar .arr.up {
    border-bottom-color: #505050;
}

.arr.down {
    margin: 0 0 6px;
    border-width: 5px 5px 0;
    border-top-color: #505050;
}

.page-bar .arr.down {
    border-top-color: #a0a0a0;
}

.arr.left {
    margin: 0 7px;
    border-width: 5px 5px 5px 0;
    border-right-color: #808080;
}

.arr.right {
    margin: 0 6px;
    border-width: 5px 0 5px 5px;
    border-left-color: #404040;
}

.content {
    width: 1546px;
    flex: none;
    padding: 0 48px;
    position: relative;
}

.page-head {
    height: 45px;
    display: flex;
    align-items: flex-end;
    justify-content: space-between;
    overflow: hidden;
}

.page-head h1 {
    margin: 0 0 38px 2px;
    font-size: 28px;
    line-height: 36px;
    font-weight: 700;
    white-space: nowrap;
}

.head-btn {
    width: 141px;
    height: 40px;
    margin-bottom: 38px;
    background: #fff;
    border: 1px solid #545b64;
    border-radius: 2px;
}

.card {
    background: #fff;
    box-shadow: 0 1px 1px 0 rgba(0, 28, 36, .3), 1px 1px 1px 0 rgba(0, 28, 36, .15), -1px 1px 1px 0 rgba(0, 28, 36, .15);
}

.card-head {
    background: #fafafa;
    border-bottom: 1px solid #eaeded;
}

.card h2 {
    font-size: 24px;
    font-weight: 700;
}

.details-head {
    height: 80px;
    padding: 23px 25px 0;
    line-height: 28px;
}

.details-grid {
    display: grid;
    grid-template-columns: repeat(4, 1fr);
    grid-template-rows: 85px 57px;
    row-gap: 25px;
    padding: 20px 0 26px;
    font-size: 18px;
}

.cell {
    padding-left: 25px;
    border-left: 1px solid #eaeded;
}

.cell:nth-child(4n+1) {
    border-left: 0;
}

.label {
    height: 26px;
    line-height: 26px;
    margin-bottom: 3px;
    color: #545b64;
}

.value {
    line-height: 27px;
    white-space: nowrap;
}

.copy {
    display: inline-block;
    width: 17px;
    height: 17px;
    margin: 0 15px 0 7px;
    vertical-align: -3px;
}

.link {
    color: #0073bb;
    text-decoration: underline;
}

.sel {
    background: #2f62d9;
    color: #d8e4ff;
}

.ext {
    display: inline-block;
    margin-left: 3px;
    vertical-align: -3px;
}

.tabs {
    height: 63px;
    margin: 31px 1px 0 2px;
    display: flex;
    align-items: center;
    border-bottom: 1px solid #aab7b8;
    font-size: 18px;
    font-weight: 700;
    letter-spacing: 0.3px;
    color: #545b64;
}

.rule-tab {
    height: 100%;
    display: flex;
    align-items: center;
    padding-bottom: 9px;
    position: relative;
}

.rule-tab.on {
    width: 163px;
    justify-content: center;
    color: #0073bb;
    border-bottom: 2px solid #16191f;
    margin-bottom: -1px;
}

.rule-tab.out {
    width: 181px;
    justify-content: center;
}

.rule-tab.tags {
    padding-left: 25px;
}

.rule-tab.on::after,
.rule-tab.out::after {
    content: "";
    position: absolute;
    right: 0;
    top: 10px;
    width: 1px;
    height: 36px;
    background: #aab7b8;
}

.rules {
    margin-top: 48px;
}

.rules-head {
    height: 135px;
    padding: 20px 26px 0 25px;
}

.rules-top {
    display: flex;
    align-items: center;
    justify-content: space-between;
    height: 38px;
}

.count {
    font-size: 22px;
    font-weight: 400;
    color: #687078;
}

.actions {
    display: flex;
    gap: 10px;
    font-size: 18px;
    font-weight: 700;
    letter-spacing: 0.3px;
}

.btn {
    height: 38px;
    display: flex;
    align-items: center;
    justify-content: center;
    padding-bottom: 1px;
    background: #fff;
    border: 1px solid #545b64;
    border-radius: 2px;
    color: #545b64;
}

.refresh {
    width: 62px;
}

.btn.off {
    width: 160px;
    border-color: #d5dbdb;
    color: #879596;
}

.btn.edit {
    width: 209px;
    letter-spacing: 0.55px;
}

.rules-tools {
    margin-top: 17px;
    display: flex;
    align-items: center;
    justify-content: space-between;
}

.rule-search {
    width: 809px;
    height: 40px;
    display: flex;
    align-items: center;
    gap: 12px;
    padding-left: 10px;
    background: #fff;
    border: 1px solid #687078;
    border-radius: 2px;
    font-size: 17.500px;
    font-style: italic;
    color: #687078;
}

.pager {
    display: flex;
    align-items: center;
    font-size: 18px;
    font-weight: 700;
    color: #16191f;
}

.pager span {
    width: 55px;
    text-align: center;
}

.pager-gear {
    height: 40px;
    margin-left: 17px;
    padding: 9px 5px 0 15px;
    border-left: 1px solid #eaeded;
}

.rules-table {
    width: 100%;
    table-layout: fixed;
    border-collapse: collapse;
    font-size: 18px;
}

.c-check {
    width: 67px;
}

.c-name {
    width: 225px;
}

.c-mid {
    width: 250px;
}

.rules-table th {
    height: 49px;
    padding: 0 0 1px;
    background: #fafafa;
    border-bottom: 1px solid #eaeded;
    color: #545b64;
    font-weight: 700;
    letter-spacing: 0.2px;
    text-align: left;
}

.th {
    height: 25px;
    display: flex;
    align-items: center;
    justify-content: space-between;
    padding: 0 18px 0 25px;
    border-left: 1px solid #879596;
    white-space: nowrap;
}

.th.light {
    border-left-color: #eaeded;
}

.th.first {
    border: 0;
    padding-left: 25px;
}

.filter {
    width: 13px;
    height: 13px;
}

.box {
    width: 17px;
    height: 17px;
    background: #fff;
    border: 1px solid #687078;
    border-radius: 2px;
}

.rules-table td {
    height: 51px;
    padding: 0 0 2px 25px;
    white-space: nowrap;
    letter-spacing: 0.12px;
}

.rules-table .td-name {
    padding-left: 26px;
}

.hscroll {
    height: 20px;
    display: flex;
    align-items: center;
    background: #f1f1f1;
}

.hthumb {
    width: 998px;
    height: 17px;
    background: #bfbfbf;
}

.mark-box {
    position: absolute;
    left: 1249px;
    top: 486px;
    width: 243px;
    height: 65px;
    border: 5px solid #ed1c24;
}

.mark-arrow {
    position: absolute;
    left: 1377px;
    top: 358px;
}

.rail {
    width: 52px;
    flex: none;
    background: #fff;
    border-left: 2px solid #d5dbdb;
    padding: 14px 0 0 13px;
}

.float-a {
    position: absolute;
    left: 1871px;
    top: 501px;
    width: 49px;
    height: 45px;
    padding: 7px 0 0 7px;
    background: #fff;
    border-radius: 22px 0 0 22px;
    box-shadow: 0 0 6px rgba(0, 0, 0, .08);
}

.float-a svg {
    width: 30px;
    height: 30px;
}

.float-b {
    position: absolute;
    left: 1838px;
    top: 556px;
    width: 82px;
    height: 45px;
    padding: 8px 0 0 11px;
    background: #fff;
    border-radius: 22px 0 0 22px;
    box-shadow: 0 1px 8px rgba(0, 0, 0, .15);
}

/* footer */
.aws-foot {
    height: 38px;
    flex: none;
    display: flex;
    align-items: center;
    padding-left: 20px;
    background: #232f3e;
    border-top: 1px solid #545b64;
    color: #fff;
    font-size: 15px;
    font-weight: 500;
}

.foot-shell {
    margin-left: 7px;
}

.foot-feedback {
    margin-left: 31px;
}

.foot-copy {
    margin-left: auto;
    letter-spacing: 0.05px;
}

.foot-link {
    margin-left: 31px;
}

.foot-link.first {
    margin-left: 37.500px;
}

.foot-link:last-child {
    margin-left: 28.500px;
    margin-right: 20px;
}

/* taskbar */
.taskbar {
    height: 60px;
    flex: none;
    display: flex;
    align-items: center;
    background: #3a2716;
    border-top: 1px solid #4c3c2c;
    color: #fff;
    font-family: "Open Sans", sans-serif;
    font-size: 15px;
}

.ticker {
    width: 391px;
    padding-left: 23px;
    display: flex;
    align-items: center;
    position: relative;
}

.ticker-badge {
    position: absolute;
    left: 38px;
    top: 0;
    width: 20px;
    height: 20px;
    border-radius: 50%;
    background: #c42b1c;
    font-size: 12px;
    text-align: center;
    line-height: 20px;
}

.ticker-text {
    margin: -2px 0 0 11px;
    line-height: 20px;
}

.ticker-text .up {
    color: #6fc64a;
}

.win-search {
    width: 273px;
    height: 38px;
    margin-left: 18px;
    display: flex;
    align-items: center;
    padding: 0 8px 0 14px;
    border-radius: 19px;
    background: #f3f3f3;
    color: #555;
    font-size: 17px;
}

.win-search span {
    margin-left: 10px;
}

.search-art {
    margin-left: auto;
}

.task-view {
    margin-left: 15px;
}

.apps {
    display: flex;
    gap: 25px;
    margin-left: 25px;
}

.app {
    width: 30px;
    height: 59px;
    padding-top: 14px;
    display: flex;
    flex-direction: column;
    align-items: center;
    position: relative;
}

.app-ic {
    width: 30px;
    height: 30px;
    flex: none;
}

.amazon {
    background: #fff;
    color: #232f3e;
    font-family: "Liberation Sans", sans-serif;
    font-size: 26px;
    line-height: 22px;
    font-weight: 700;
    text-align: center;
    display: flex;
    flex-direction: column;
    align-items: center;
}

.r-app {
    border-radius: 7px;
    border: 4px solid #f37a12;
    background: #fff;
    color: #0c6ec9;
    font-family: "Liberation Sans", sans-serif;
    font-size: 22px;
    font-weight: 700;
    line-height: 22px;
    text-align: center;
}

.out-o {
    fill: #fff;
    font-size: 13px;
    font-weight: 700;
    text-anchor: middle;
}

.pip {
    width: 8px;
    height: 4px;
    margin-top: 7px;
    border-radius: 2px;
    background: #9c9a96;
}

.pip.none {
    visibility: hidden;
}

.pip.wide {
    width: 24px;
    background: #4cc2ff;
}

.app.current::before {
    content: "";
    position: absolute;
    left: -10px;
    top: 4px;
    width: 50px;
    height: 50px;
    border-radius: 5px;
    background: rgba(255, 255, 255, .06);
    border: 1px solid rgba(255, 255, 255, .05);
}

.app-badge {
    position: absolute;
    left: 17px;
    top: 9px;
    width: 20px;
    height: 25px;
    border-radius: 50%;
    background: #5a3a2c;
    color: #ddd;
    font-size: 11px;
    text-align: center;
    line-height: 25px;
}

.tray {
    margin-left: 97px;
    display: flex;
    align-items: center;
}

.tr-cloud {
    margin-left: 21px;
}

.tr-wifi {
    margin-left: 18px;
}

.tr-sound {
    margin-left: 8px;
}

.tr-batt {
    margin-left: 8px;
}

.clock {
    margin: -2px 0 0 12px;
    width: 70px;
    text-align: right;
    line-height: 20px;
}

.tr-bell {
    margin-left: 10px;
}
```
